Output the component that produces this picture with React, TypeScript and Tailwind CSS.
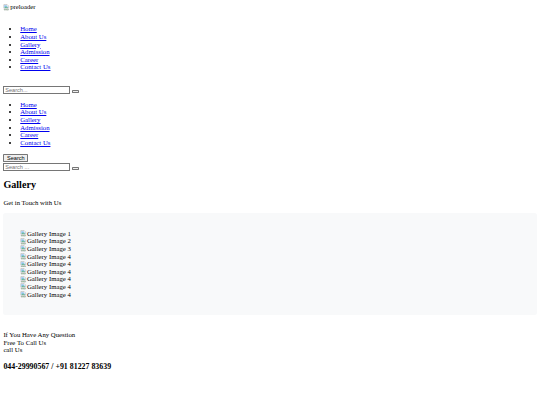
import React from 'react';

const navItems = ['Home', 'About Us', 'Gallery', 'Admission', 'Career', 'Contact Us'];
const galleryItems = [
  'Gallery Image 1',
  'Gallery Image 2',
  'Gallery Image 3',
  'Gallery Image 4',
  'Gallery Image 4',
  'Gallery Image 4',
  'Gallery Image 4',
  'Gallery Image 4',
  'Gallery Image 4',
];

// Chrome-style broken image glyph, shown before the alt text
function BrokenImage({ alt }: { alt: string }) {
  return (
    <span>
      <svg width="16" height="16" viewBox="0 0 16 16" className="inline align-[-3px]">
        <path d="M2 1.5h8l3.5 3.5v4.5l-2 1.5-2-1.5-2 1.5-2-1.5-2 1.5-1.5-1z" fill="#fff" stroke="#8a8a8a" />
        <path d="M3 3h6v3h3v3l-1 .8-2-1.5-2 1.5-2-1.5-2 1.5z" fill="#8fc2ef" />
        <path d="M3 9.3l2-1.5 2 1.5 2-1.5 2 1.5V8c-1.5-1.6-3-2-4.5-1.2C4.8 7.5 3.8 8.3 3 9z" fill="#4caf50" />
        <path d="M2.5 12.5l1.5 1 2-1.5 2 1.5 2-1.5 2 1.5 1.5-1v1.5h-11z" fill="#fff" stroke="#8a8a8a" />
        <path d="M3.5 13.5l1.5-1 2 1.5 2-1.5 2 1.5 1.5-1" fill="none" stroke="#4caf50" strokeWidth="0.8" />
      </svg>
      {alt}
    </span>
  );
}

function NavList() {
  return (
    <ul className="list-disc pl-10">
      {navItems.map((item) => (
        <li key={item}>
          <a href="#" className="text-[#0000ee] underline">
            {item}
          </a>
        </li>
      ))}
    </ul>
  );
}

function SearchBox({ placeholder }: { placeholder: string }) {
  return (
    <div className="flex items-end">
      <input
        type="text"
        placeholder={placeholder}
        className="w-[159px] h-[19px] border border-[#767676] bg-white px-[2px] font-['Liberation_Sans',Arial,sans-serif] text-[13.33px] placeholder:text-[#757575] outline-none"
      />
      <button className="ml-[4px] mb-[3px] w-[16px] h-[6px] border border-[#767676] bg-[#efefef] rounded-[2px]" />
    </div>
  );
}

export default function App() {
  return (
    <div className="w-[1280px] min-h-[960px] [zoom:0.421875] bg-white text-black font-['Liberation_Serif','Times_New_Roman',serif] text-[16px] leading-[18px]">
      <div className="p-2">
        <div>
          <BrokenImage alt="preloader" />
        </div>

        <nav className="mt-[34px]">
          <NavList />
        </nav>

        <div className="mt-[36px]">
          <SearchBox placeholder="Search..." />
        </div>

        <div className="mt-4">
          <NavList />
        </div>

        <div className="mt-[18px]">
          <button className="h-[19px] px-[6px] border border-[#767676] bg-[#efefef] rounded-[2px] font-['Liberation_Sans',Arial,sans-serif] text-[13.33px] leading-[15px]">
            Search
          </button>
          <div className="mt-[2px]">
            <SearchBox placeholder="Search ..." />
          </div>
        </div>

        <h2 className="mt-[20px] text-[24px] leading-[27.6px] font-bold">Gallery</h2>
        <p className="mt-[18px]">Get in Touch with Us</p>

        <section className="mt-4 bg-[#f8f9fa] rounded-[6px] p-10">
          {galleryItems.map((item, i) => (
            <div key={i}>
              <BrokenImage alt={item} />
            </div>
          ))}
        </section>

        <div className="mt-[38px]">
          <div>If You Have Any Question</div>
          <div>Free To Call Us</div>
          <div>call Us</div>
        </div>
        <h3 className="mt-[18.7px] text-[18.72px] leading-[21.5px] font-bold">044-29990567 / +91 81227 83639</h3>
      </div>
    </div>
  );
}
